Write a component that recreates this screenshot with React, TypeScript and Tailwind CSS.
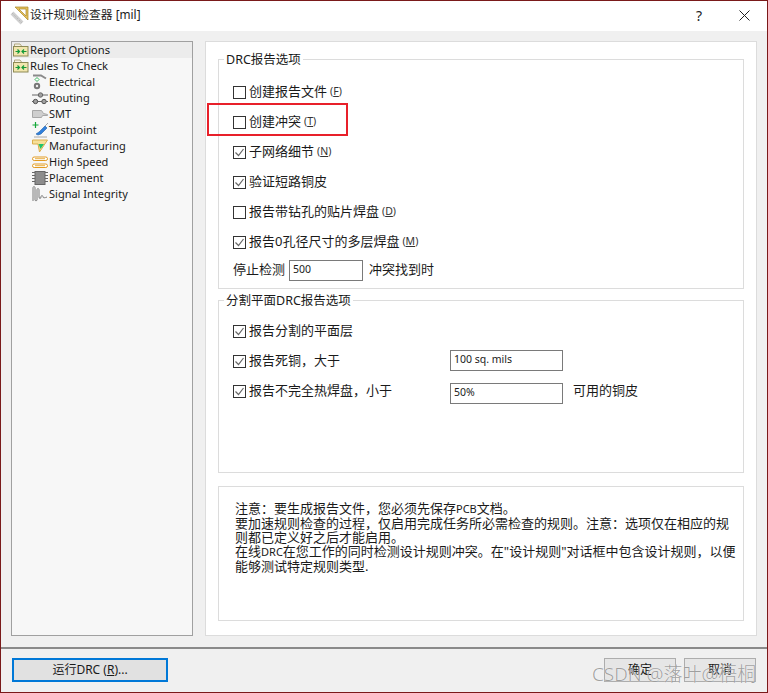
import type { ReactNode } from 'react';

const FONT = "font-['Noto_Sans','Noto_Sans_CJK_SC',sans-serif]";

function FolderIcon() {
  return (
    <svg width="16" height="14" viewBox="0 0 16 14" className="shrink-0">
      <path d="M1.500 3V1h5.500L8.500 3" fill="#f7f3e3" stroke="#b0a880" />
      <rect x="0.500" y="3.500" width="14.500" height="9.500" fill="#f2e6ae" stroke="#8d8a55" />
      <path d="M2.500 8.500h4M4.500 6.500l2 2-2 2M13.500 8.500h-4M11 6.500l-2 2 2 2" fill="none" stroke="#149a38" strokeWidth="1.2" />
    </svg>
  );
}

function ElectricalIcon() {
  return (
    <svg width="16" height="16" viewBox="0 0 16 16">
      <path d="M1 1.500h8l5 3" fill="none" stroke="#8a8a8a" strokeWidth="2" />
      <path d="M5 3.500l2 2-2 2-2-2z" fill="#fff" stroke="#35b45a" />
      <circle cx="5" cy="12" r="3.200" fill="#777" />
      <circle cx="5" cy="12" r="1.200" fill="#eee" />
    </svg>
  );
}

function RoutingIcon() {
  return (
    <svg width="16" height="14" viewBox="0 0 16 14">
      <path d="M0 4h16M0 10.500h16" stroke="#666" />
      <circle cx="8.500" cy="4" r="2.200" fill="#a0a0a0" stroke="#666" />
      <circle cx="3.500" cy="10.500" r="2.200" fill="#a0a0a0" stroke="#555" />
      <circle cx="12" cy="10.500" r="2.200" fill="#a0a0a0" stroke="#555" />
    </svg>
  );
}

function SmtIcon() {
  return (
    <svg width="16" height="10" viewBox="0 0 16 10">
      <path d="M0.500 1.500h9l2 3 4 1v1h-5l-1 2h-9z" fill="#cfcfcf" stroke="#a8a8a8" />
    </svg>
  );
}

function TestpointIcon() {
  return (
    <svg width="17" height="16" viewBox="0 0 17 16">
      <path d="M3.500 0v6M0.500 3h6" stroke="#12a838" strokeWidth="1.2" />
      <path d="M4 12l3-2 6-6 2 2-6 6-3 1z" fill="#2f7fdc" stroke="#1f5fa8" strokeWidth="0.6" />
      <path d="M13 4l3-3M2 15h13" stroke="#a8a8a8" />
    </svg>
  );
}

function ManufacturingIcon() {
  return (
    <svg width="16" height="14" viewBox="0 0 16 14">
      <path d="M0.500 1h15l-8 12-1.500-8h-5.500z" fill="#f6e09a" stroke="#dcae4c" />
      <path d="M6.500 5h5.500l-3.500 5z" fill="#1fc26a" />
    </svg>
  );
}

function HighSpeedIcon() {
  return (
    <svg width="16" height="13" viewBox="0 0 16 13">
      <rect x="0.500" y="1" width="15" height="3.500" rx="1.700" fill="#fff" stroke="#e19a22" />
      <rect x="0.500" y="8" width="15" height="3.500" rx="1.700" fill="#fff" stroke="#e19a22" />
      <path d="M3 2.700h10M3 9.700h10" stroke="#e9b044" />
    </svg>
  );
}

function PlacementIcon() {
  return (
    <svg width="16" height="14" viewBox="0 0 16 14">
      <path d="M0 1.500h3M0 4.500h3M0 7.500h3M0 10.500h3M13 1.500h3M13 4.500h3M13 7.500h3M13 10.500h3" stroke="#666" />
      <rect x="3" y="0.500" width="10" height="13" fill="#8c8c8c" stroke="#666" />
    </svg>
  );
}

function SignalIcon() {
  return (
    <svg width="16" height="16" viewBox="0 0 16 16">
      <path d="M1 15V2c0-2 2-2 2 0v12c0 1 2 1 2 0V4c0-2 2-2 2 0v7c0 2 2 2 2 0 0-2 2-2 2 0 0 1 2 1 4 0" fill="none" stroke="#7a7a7a" />
    </svg>
  );
}

function TreeRow({ icon, label, child, selected }: { icon: ReactNode; label: string; child?: boolean; selected?: boolean }) {
  return (
    <div className={`flex h-4 items-center ${child ? 'pl-[19px]' : ''} ${selected ? 'bg-[#ececec]' : ''}`}>
      <span className="flex h-4 w-[18px] items-center justify-center">{icon}</span>
      <span className={`${child ? 'text-[11px]' : 'text-[11.2px]'} leading-4 text-[#1a1a1a]`}>{label}</span>
    </div>
  );
}

function CheckBox({ checked }: { checked?: boolean }) {
  return (
    <span className="flex h-[13px] w-[13px] shrink-0 items-center justify-center border border-[#333] bg-white">
      {checked && (
        <svg width="11" height="11" viewBox="0 0 11 11">
          <path d="M1.500 5.500l3 3 5-6.500" fill="none" stroke="#666" strokeWidth="1.2" />
        </svg>
      )}
    </span>
  );
}

function CheckRow({ checked, label, hint }: { checked?: boolean; label: string; hint?: string }) {
  return (
    <div className="flex h-[30px] items-center gap-[3px]">
      <CheckBox checked={checked} />
      <span className="text-[13px] text-[#1a1a1a]">{label}</span>
      {hint && (
        <span className="text-[10.5px] text-[#333]">
          (<span className="underline">{hint}</span>)
        </span>
      )}
    </div>
  );
}

function Field({ value, width, className = '' }: { value: string; width: string; className?: string }) {
  return (
    <div className={`flex h-[21px] items-center border border-[#7a7a7a] bg-white pl-[3px] text-[10.5px] text-[#1a1a1a] ${width} ${className}`}>
      {value}
    </div>
  );
}

function GroupBox({ title, height, children }: { title: string; height: string; children: ReactNode }) {
  return (
    <div className={`relative border border-[#dcdcdc] ${height}`}>
      <span className="absolute -top-[8px] left-[5px] bg-white px-[2px] text-[12.5px] leading-4 text-[#1a1a1a]">{title}</span>
      {children}
    </div>
  );
}

const TREE = [
  { label: 'Electrical', icon: <ElectricalIcon /> },
  { label: 'Routing', icon: <RoutingIcon /> },
  { label: 'SMT', icon: <SmtIcon /> },
  { label: 'Testpoint', icon: <TestpointIcon /> },
  { label: 'Manufacturing', icon: <ManufacturingIcon /> },
  { label: 'High Speed', icon: <HighSpeedIcon /> },
  { label: 'Placement', icon: <PlacementIcon /> },
  { label: 'Signal Integrity', icon: <SignalIcon /> },
];

export default function App() {
  return (
    <div className={`relative flex h-[693px] w-[768px] flex-col overflow-hidden border-x border-b border-[#7a1a1a] bg-[#f0f0f0] ${FONT}`}>
      <div className="flex h-[31px] shrink-0 items-center border-t border-[#7a1a1a] bg-white pb-[2px] pl-[9px] pr-[17px]">
        <svg width="20" height="20" viewBox="0 0 20 20" className="shrink-0">
          <path d="M2 8l10 10" stroke="#cfcfcf" strokeWidth="4" />
          <path d="M2 8l10 10" stroke="#999" strokeWidth="0.6" strokeDasharray="1 1.500" />
          <path d="M5 2h13v13z M9 4l7 7V4z" fill="#e5c05a" fillRule="evenodd" stroke="#a8872c" strokeWidth="0.7" />
        </svg>
        <span className="text-[11.8px] text-[#1a1a1a]">设计规则检查器 [mil]</span>
        <span className="ml-auto text-[14px] text-[#222]">?</span>
        <svg width="11" height="11" viewBox="0 0 11 11" className="ml-[37px]">
          <path d="M0.500 0.500l10 10M10.500 0.500l-10 10" stroke="#222" />
        </svg>
      </div>

      <div className="flex h-[616px] shrink-0 gap-3 px-[10px] pt-[10px]">
        <div className="h-[595px] w-[182px] shrink-0 border border-[#a0a0a0] bg-[#f7f7f7]">
          <TreeRow icon={<FolderIcon />} label="Report Options" selected />
          <TreeRow icon={<FolderIcon />} label="Rules To Check" />
          {TREE.map((item) => (
            <TreeRow key={item.label} icon={item.icon} label={item.label} child />
          ))}
        </div>

        <div className="flex h-[595px] w-[552px] shrink-0 flex-col border border-[#dcdcdc] bg-white px-3 pt-[17px]">
          <GroupBox title="DRC报告选项" height="h-[230px]">
            <div className="px-[14px] pt-[17px]">
              <CheckRow label="创建报告文件" hint="F" />
              <CheckRow label="创建冲突" hint="T" />
              <CheckRow checked label="子网络细节" hint="N" />
              <CheckRow checked label="验证短路铜皮" />
              <CheckRow label="报告带钻孔的贴片焊盘" hint="D" />
              <CheckRow checked label="报告0孔径尺寸的多层焊盘" hint="M" />
              <div className="flex h-[26px] items-center text-[13px] text-[#1a1a1a]">
                <span className="w-[56px]">停止检测</span>
                <Field value="500" width="w-[74px]" />
                <span className="ml-[6px]">冲突找到时</span>
              </div>
            </div>
          </GroupBox>

          <div className="mt-[11px]">
            <GroupBox title="分割平面DRC报告选项" height="h-[173px]">
              <div className="px-[14px] pt-[15px]">
                <CheckRow checked label="报告分割的平面层" />
                <div className="flex h-[30px] items-center">
                  <div className="w-[217px]">
                    <CheckRow checked label="报告死铜，大于" />
                  </div>
                  <Field value="100 sq. mils" width="w-[113px]" className="-mt-[2px]" />
                </div>
                <div className="flex h-[30px] items-center">
                  <div className="w-[217px]">
                    <CheckRow checked label="报告不完全热焊盘，小于" />
                  </div>
                  <Field value="50%" width="w-[113px]" className="mt-[4px]" />
                  <span className="ml-[10px] text-[13px] text-[#1a1a1a]">可用的铜皮</span>
                </div>
              </div>
            </GroupBox>
          </div>

          <div className="mt-[13px] h-[135px] whitespace-nowrap border border-[#dcdcdc] pl-4 pt-[14px] text-[13px] leading-[14px] text-[#1a1a1a]">
            注意：要生成报告文件，您必须先保存<span className="text-[11px]">PCB</span>文档。
            <br />
            要加速规则检查的过程，仅启用完成任务所必需检查的规则。注意：选项仅在相应的规
            <br />
            则都已定义好之后才能启用。
            <br />
            在线<span className="text-[11px]">DRC</span>在您工作的同时检测设计规则冲突。在"设计规则"对话框中包含设计规则，以便
            <br />
            能够测试特定规则类型.
          </div>
        </div>
      </div>

      <div className="flex flex-1 items-start justify-between border-t-2 border-[#8a8a8a] px-[11px] pt-[9px]">
        <button className="h-[24px] w-[156px] border-2 border-[#0078d7] bg-[#e1e1e1] text-[12px] leading-none text-[#1a1a1a]">
          运行DRC (<span className="underline">R</span>)...
        </button>
        <div className="flex gap-2">
          <button className="h-[24px] w-[72px] border border-[#adadad] bg-[#e6e6e6] text-[12px] leading-none text-[#1a1a1a]">确定</button>
          <button className="h-[24px] w-[72px] border border-[#adadad] bg-[#e6e6e6] text-[12px] leading-none text-[#1a1a1a]">取消</button>
        </div>
      </div>

      {/* 红框标注 */}
      <div className="absolute left-[206px] top-[103px] h-[33px] w-[141px] border-2 border-[#e8202a]" />
      {/* 水印 */}
      <div className="absolute left-[591px] top-[662px] text-[19px] font-light leading-6 text-[#777]/70 [text-shadow:0_0_1px_#fff]">CSDN @落叶@梧桐</div>
    </div>
  );
}
